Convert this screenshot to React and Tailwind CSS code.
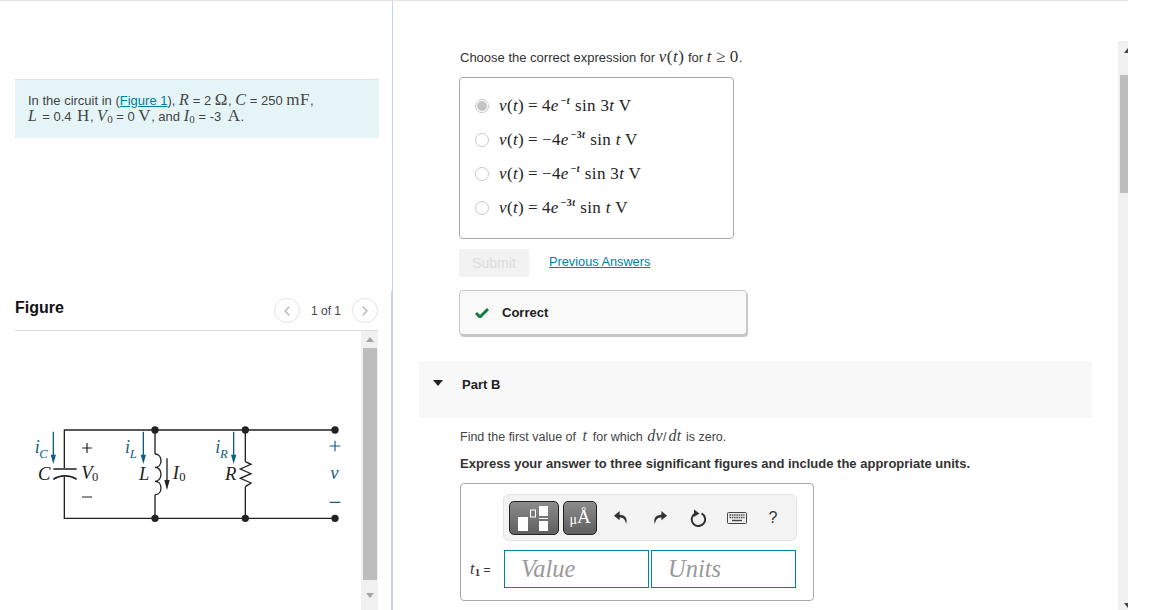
import React from 'react';
import { ChevronLeft, ChevronRight } from 'lucide-react';

const serif = "font-['Liberation_Serif',serif]";

const answers = [
    { id: 'a', coef: '4', exp: '−', expT: 't', rest: 'sin 3', unit: 't', on: true },
    { id: 'b', coef: '−4', exp: '−3', expT: 't', rest: 'sin ', unit: 't' },
    { id: 'c', coef: '−4', exp: '−', expT: 't', rest: 'sin 3', unit: 't' },
    { id: 'd', coef: '4', exp: '−3', expT: 't', rest: 'sin ', unit: 't' },
];

function V({ children }) {
    return <i className={`${serif} text-[16px] tracking-[0.3px]`}>{children}</i>;
}

function R({ children }) {
    return <span className={`${serif} text-[17px] tracking-[0.5px]`}>{children}</span>;
}

function Sub({ children, bold }) {
    return <sub className={`${serif} text-[11px] bottom-0 align-[-2px] ${bold ? 'font-bold' : ''}`}>{children}</sub>;
}

function AnswerRow({ item }) {
    return (
        <div className="flex items-center h-[34px]">
            <span className="w-[14px] h-[14px] rounded-full border border-[#c9c9c9] flex items-center justify-center bg-white">
                {item.on && <span className="w-[10px] h-[10px] rounded-full bg-[#c4c4c4]"></span>}
            </span>
            <span className={`ml-[10px] ${serif} text-[#222] text-[17px] tracking-[0.35px] whitespace-nowrap`}>
                <i>v</i>(<i>t</i>)<span className="mx-[4px]">=</span>{item.coef}<i>e</i>
                <sup className="text-[10px] font-bold top-[-7px] relative align-baseline ml-[2px] mr-[5px]">{item.exp}<i>{item.expT}</i></sup>
                {item.rest}<i>{item.unit}</i> V
            </span>
        </div>
    );
}

function ScrollArrow({ up, dark }) {
    return (
        <svg width="8" height="5" viewBox="0 0 8 5" className={up ? '' : 'rotate-180'}>
            <path d="M4 0 L8 5 L0 5 Z" fill={dark ? '#444' : '#a6a6a6'} />
        </svg>
    );
}

function Circuit() {
    const blue = '#0f5f85';
    const ink = '#222';
    return (
        <svg width="340" height="130" viewBox="0 0 1020 390" className="block">
            <g fill="none" stroke={ink} strokeWidth="4">
                <path d="M133 178V60H945M133 200V325H945" />
                <path d="M405 60V132M405 254V325M676 60V155M676 230V325" />
                <path d="M405 132c24 0 24 40 0 40c24 0 24 42 0 42c24 0 24 40 0 40" />
                <path d="M676 155l17 8l-32 14l32 14l-32 14l32 14l-17 11" />
                <path d="M100 208c20-14 50-14 70 0" strokeWidth="5" />
            </g>
            <path d="M100 177H170" stroke="#555" strokeWidth="6" />
            {[[405, 60], [676, 60], [945, 60], [405, 325], [676, 325], [945, 325]].map(([x, y]) => (
                <circle key={`${x}-${y}`} cx={x} cy={y} r="11" fill={ink} />
            ))}
            {[100, 370, 641].map((x) => (
                <g key={x}>
                    <path d={`M${x} 65V140`} stroke={blue} strokeWidth="4" />
                    <path d={`M${x - 8} 134H${x + 8}L${x} 162Z`} fill={blue} />
                </g>
            ))}
            <path d="M441 145V215" stroke={ink} strokeWidth="4" />
            <path d="M433 210H449L441 240Z" fill={ink} />
            <g fontFamily="Liberation Serif, serif" fontSize="56" fill={ink}>
                <text x="54" y="210" fontStyle="italic">C</text>
                <text x="184" y="208" fontStyle="italic">V</text>
                <text x="216" y="212" fontSize="38">0</text>
                <text x="357" y="210" fontStyle="italic">L</text>
                <text x="458" y="208" fontStyle="italic">I</text>
                <text x="478" y="214" fontSize="38">0</text>
                <text x="615" y="210" fontStyle="italic">R</text>
            </g>
            <path d="M186 114H216M201 99V129M186 261H216" stroke={ink} strokeWidth="3.5" fill="none" />
            <g fontFamily="Liberation Serif, serif" fill={blue} fontStyle="italic">
                <text x="44" y="130" fontSize="54">i</text>
                <text x="58" y="144" fontSize="38">C</text>
                <text x="315" y="130" fontSize="54">i</text>
                <text x="329" y="144" fontSize="38">L</text>
                <text x="586" y="130" fontSize="54">i</text>
                <text x="600" y="144" fontSize="38">R</text>
                <text x="931" y="208" fontSize="56">v</text>
            </g>
            <path d="M929 108H961M945 92V124M929 277H961" stroke={blue} strokeWidth="3.5" fill="none" />
        </svg>
    );
}

function ToolIcon({ children }) {
    return <span className="w-[38.5px] flex items-center justify-center text-[#333]">{children}</span>;
}

export default function App() {
    return (
        <div className="w-[1150px] h-[610px] overflow-hidden bg-white font-['Liberation_Sans',sans-serif] text-[12px] text-[#333]">
            <div className="h-px w-[1128px] bg-[#e2e2e2]"></div>
            <div className="flex h-[609px]">
                {/* left column */}
                <div className="w-[393px] shrink-0 border-r border-[#c3d5e6] pl-[15px] pt-[78px] flex flex-col">
                    <div className="w-[364px] h-[59px] bg-[#e5f5f7] border-t border-[#dce6e8] pl-[13px] pt-[12px] text-[13px] leading-[16px] text-[#444] whitespace-nowrap">
                        <div className="h-[16px]">
                            In the circuit in (<span className="text-[#007fa3] underline">Figure 1</span>), <V>R</V> = 2 <R>Ω</R>, <V>C</V> = 250 <R>mF</R>,
                        </div>
                        <div className="h-[16px]">
                            <V>L</V><span className="ml-[5px]">=</span> 0.4 <span className="ml-[2px]"><R>H</R></span>, <V>V</V><Sub>0</Sub> = 0 <R>V</R>, and <V>I</V><Sub>0</Sub> = -3 <span className="ml-[3px]"><R>A</R></span>.
                        </div>
                    </div>
                    <div className="mt-[153px] flex-1 flex flex-col border-r border-[#c3d5e6] pt-[6px]">
                        <div className="h-[34px] flex items-start justify-between border-b border-[#dcdcdc] w-[363px]">
                            <span className="text-[16px] font-bold text-[#111] leading-[20px] mt-[1px]">Figure</span>
                            <div className="flex items-center mt-[1px] text-[12px] text-[#444]">
                                <span className="w-[26px] h-[25px] rounded-full border border-[#e3e3e3] flex items-center justify-center text-[#b5b5b5]">
                                    <ChevronLeft size={16} />
                                </span>
                                <span className="w-[52px] text-center">1 of 1</span>
                                <span className="w-[26px] h-[25px] rounded-full border border-[#e3e3e3] flex items-center justify-center text-[#b5b5b5]">
                                    <ChevronRight size={16} />
                                </span>
                            </div>
                        </div>
                        <div className="flex flex-1 w-[363px]">
                            <div className="w-[346px] pl-[5px] pt-[79px]">
                                <Circuit />
                            </div>
                            <div className="w-[17px] bg-[#f0f0f0] flex flex-col items-center">
                                <div className="h-[17px] flex items-center justify-center"><ScrollArrow up /></div>
                                <div className="w-[14px] h-[232px] bg-[#bdbdbd]"></div>
                                <div className="flex-1 flex items-center justify-center"><ScrollArrow /></div>
                            </div>
                        </div>
                    </div>
                </div>

                {/* right column */}
                <div className="w-[725px] shrink-0 pl-[26px] pt-[48px]">
                    <div className="pl-[41px] text-[13px] leading-[16px] text-[#333] whitespace-nowrap">
                        Choose the correct expression for <R><i>v</i>(<i>t</i>)</R> for <R><i>t</i><span className="mx-[4px]">≥</span>0</R>.
                    </div>
                    <div className="ml-[40px] mt-[11px] w-[275px] h-[162px] border border-[#aaa] rounded-[4px] pl-[15px] pt-[11px]">
                        {answers.map((item) => <AnswerRow key={item.id} item={item} />)}
                    </div>
                    <div className="ml-[40px] mt-[10px] flex items-start">
                        <span className="w-[70px] h-[28px] bg-[#f2f2f2] rounded-[2px] text-[14px] text-[#dcdcdc] flex items-center justify-center">Submit</span>
                        <span className="ml-[20px] mt-[5px] text-[12.75px] text-[#007fa3] underline font-medium leading-[16px]">Previous Answers</span>
                    </div>
                    <div className="ml-[40px] mt-[13px] w-[288px] h-[45px] bg-[#f9f9f9] border border-[#c8c8c8] rounded-[4px] shadow-[1px_2px_1px_#c4c4c4] flex items-center pl-[15px]">
                        <svg width="14" height="11" viewBox="0 0 14 11">
                            <path d="M1 6l4 4l8-8" fill="none" stroke="#107c41" strokeWidth="3" />
                        </svg>
                        <span className="ml-[13px] text-[13px] font-bold text-[#222]">Correct</span>
                    </div>
                    <div className="mt-[26px] w-[673px] h-[56px] bg-[#f8f8f8] flex items-start pt-[16px]">
                        <svg width="10" height="6" viewBox="0 0 10 6" className="ml-[14px] mt-[3px]">
                            <path d="M0 0H10L5 6Z" fill="#222" />
                        </svg>
                        <span className="ml-[19px] text-[13px] font-bold text-[#222] leading-[16px]">Part B</span>
                    </div>
                    <div className="pl-[41px] mt-[11px] text-[12.5px] leading-[16px] text-[#444]">
                        Find the first value of <span className="ml-[3px] mr-[2px]"><V>t</V></span> for which <span className="ml-[1px] mr-[1px] tracking-[2px]"><V>dv</V>/<V>dt</V></span> is zero.
                    </div>
                    <div className="pl-[41px] mt-[11px] text-[13px] leading-[16px] font-bold text-[#333]">
                        Express your answer to three significant figures and include the appropriate units.
                    </div>
                    <div className="ml-[41px] mt-[11px] w-[354px] h-[118px] border border-[#aaa] rounded-[4px] pl-[42px] pt-[10px]">
                        <div className="w-[294px] h-[47px] bg-[#f3f3f3] border border-[#e3e3e3] rounded-[6px] flex items-center pl-[5px]">
                            <span className="w-[50px] h-[34px] rounded-[5px] border border-[#222] bg-linear-to-b from-[#8c8c8c] to-[#5f5f5f] flex items-center justify-center">
                                <svg width="32" height="26" viewBox="0 0 32 26">
                                    <rect x="0" y="12" width="10" height="14" fill="#fff" />
                                    <rect x="12.5" y="5" width="5" height="7" fill="none" stroke="#fff" />
                                    <rect x="21" y="1" width="9" height="10" fill="#fff" />
                                    <rect x="21" y="13" width="9" height="1" fill="#fff" />
                                    <rect x="21" y="16" width="9" height="10" fill="#fff" />
                                </svg>
                            </span>
                            <span className={`ml-[4px] w-[34px] h-[34px] rounded-[5px] border border-[#222] bg-linear-to-b from-[#8c8c8c] to-[#5f5f5f] flex items-center justify-center text-white ${serif}`}>
                                <span className="text-[14px] mt-[3px]">μ</span><span className="text-[19px]">Å</span>
                            </span>
                            <span className="ml-[5px] flex">
                                <ToolIcon>
                                    <svg width="14" height="15" viewBox="0 0 15 14"><path d="M6 0L0 5l6 5V7c3 0 6 1 7 7c2-6-1-10-7-10z" fill="#333" /></svg>
                                </ToolIcon>
                                <ToolIcon>
                                    <svg width="14" height="15" viewBox="0 0 15 14"><path d="M9 0l6 5l-6 5V7c-3 0-6 1-7 7c-2-6 1-10 7-10z" fill="#333" /></svg>
                                </ToolIcon>
                                <ToolIcon>
                                    <svg width="17" height="18" viewBox="0 0 17 18">
                                        <path d="M11.5 4.4A6.7 6.7 0 1 1 5 4.6" fill="none" stroke="#333" strokeWidth="2" />
                                        <path d="M4 0.5L9.5 4.5L4 8Z" fill="#333" />
                                    </svg>
                                </ToolIcon>
                                <ToolIcon>
                                    <svg width="20" height="12" viewBox="0 0 20 12">
                                        <rect x="0.5" y="0.5" width="19" height="11" rx="1" fill="#eee" stroke="#444" />
                                        <path d="M2.5 3H17.5M2.5 5.5H17.5" stroke="#444" strokeWidth="1.4" strokeDasharray="1.5 0.8" />
                                        <path d="M5 8.5H15" stroke="#444" strokeWidth="1.4" />
                                    </svg>
                                </ToolIcon>
                                <span className="w-[34px] text-center text-[16px] text-[#333]">?</span>
                            </span>
                        </div>
                        <div className="-ml-[33px] mt-[9px] flex items-center">
                            <span className="w-[34px] text-[12px] text-[#333]"><V>t</V><Sub bold>1</Sub> =</span>
                            <input readOnly placeholder="Value" className={`w-[145px] h-[38px] border border-[#007fa3] pl-[16px] text-[24.5px] italic ${serif} placeholder:text-[#9a9a9a] outline-none`} />
                            <input readOnly placeholder="Units" className={`ml-[2px] w-[145px] h-[38px] border border-[#007fa3] pl-[16px] text-[24.5px] italic ${serif} placeholder:text-[#9a9a9a] outline-none`} />
                        </div>
                    </div>
                </div>

                {/* page scrollbar */}
                <div className="w-[10px] mt-[40px] bg-[#f0f0f0] flex flex-col items-end overflow-hidden">
                    <div className="h-[34px] pt-[7px] -mr-[4px]"><ScrollArrow up dark /></div>
                    <div className="w-[8px] h-[118px] bg-[#bdbdbd]"></div>
                    <div className="flex-1 flex items-end pb-[2px] -mr-[4px]"><ScrollArrow dark /></div>
                </div>
            </div>
        </div>
    );
}
